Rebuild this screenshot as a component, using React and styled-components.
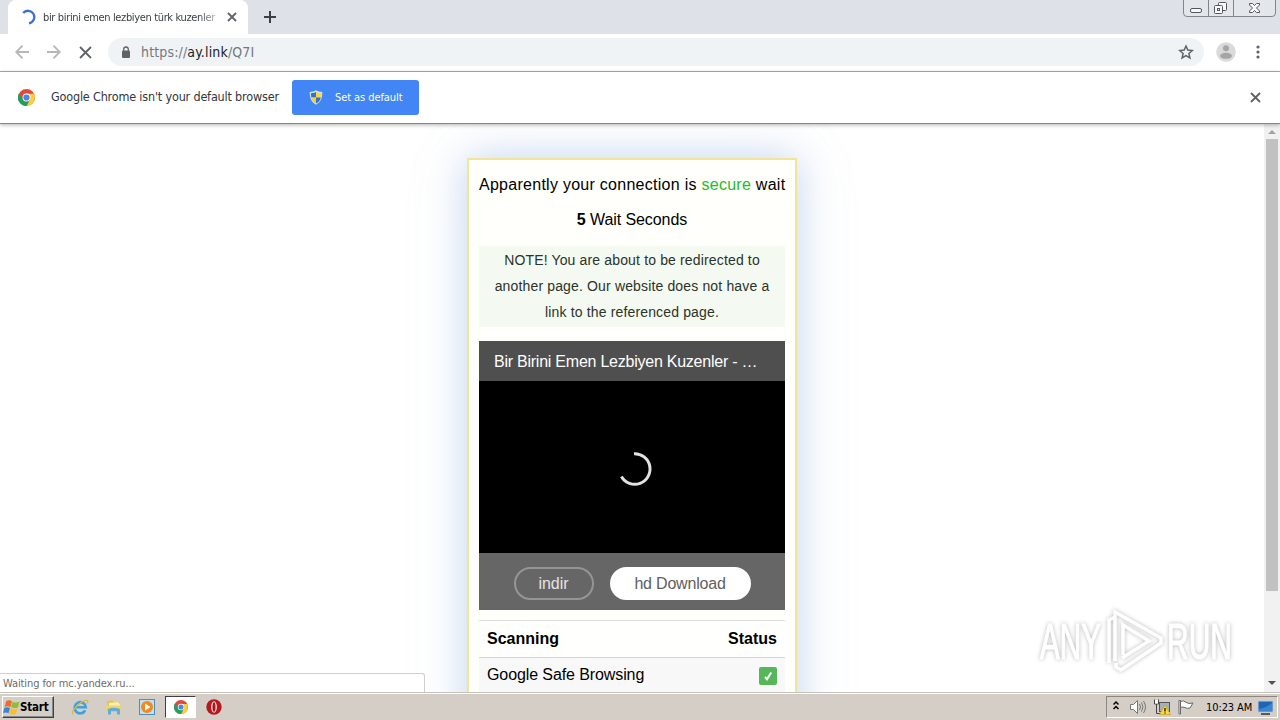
import React from 'react';
import styled, { createGlobalStyle } from 'styled-components';

const ui = '"DejaVu Sans Condensed", "DejaVu Sans", "Noto Sans", sans-serif';
const arial = '"Liberation Sans", Arial, sans-serif';

function App() {
  return (
    <Screen>
      <GlobalStyle />
      <TabStrip>
        <Tab>
          <TabSpinner />
          <TabTitle>bir birini emen lezbiyen türk kuzenler</TabTitle>
          <Cross size={8} width={1.8} />
        </Tab>
        <NewTab viewBox="0 0 12 12">
          <path d="M6 0v12M0 6h12" stroke="#3c4043" strokeWidth="2" />
        </NewTab>
        <WindowButtons />
      </TabStrip>
      <Toolbar>
        <Arrow color="#b4b6b8" />
        <Arrow color="#b4b6b8" flip />
        <Cross size={11} width={1.8} />
        <AddressBar>
          <LockIcon />
          <Url>
            https://<b>ay.link</b>/Q7I
          </Url>
          <StarIcon />
        </AddressBar>
        <ProfileIcon />
        <MenuIcon />
      </Toolbar>
      <InfoBar>
        <ChromeIcon size={17} />
        <InfoText>Google Chrome isn't your default browser</InfoText>
        <DefaultButton>
          <ShieldIcon />
          <span>Set as default</span>
        </DefaultButton>
        <InfoClose>
          <Cross size={9} width={1.8} />
        </InfoClose>
      </InfoBar>
      <Viewport>
        <Page>
          <Card>
            <Line spacing={0.27}>
              Apparently your connection is <Secure>secure</Secure> wait
            </Line>
            <Line spacing={-0.08}>
              <b>5</b> Wait Seconds
            </Line>
            <Note>
              <div>NOTE! You are about to be redirected to</div>
              <div>another page. Our website does not have a</div>
              <div>link to the referenced page.</div>
            </Note>
            <VideoTitle>Bir Birini Emen Lezbiyen Kuzenler - …</VideoTitle>
            <Video>
              <svg width="36" height="36" viewBox="0 0 36 36">
                <path
                  d="M17 2.7A15.3 15.3 0 1 1 4.4 25.5"
                  fill="none"
                  stroke="#e2e2e2"
                  strokeWidth="3"
                />
              </svg>
            </Video>
            <VideoFooter>
              <PillButton width={80}>indir</PillButton>
              <PillButton width={141} filled>
                hd Download
              </PillButton>
            </VideoFooter>
            <TableHead>
              <span>Scanning</span>
              <span>Status</span>
            </TableHead>
            <TableRow>
              <span>Google Safe Browsing</span>
              <CheckIcon />
            </TableRow>
          </Card>
        </Page>
        <ScrollBar>
          <ScrollArrow viewBox="0 0 16 15">
            <path d="M4 10l4-4 4 4z" fill="#a3a3a3" />
          </ScrollArrow>
          <ScrollThumb />
          <ScrollArrow viewBox="0 0 16 15">
            <path d="M4 4l4 4 4-4z" fill="#505050" />
          </ScrollArrow>
        </ScrollBar>
        <StatusBubble>Waiting for mc.yandex.ru...</StatusBubble>
        <Watermark />
      </Viewport>
      <Taskbar>
        <StartButton>
          <WindowsFlag />
          <span>Start</span>
        </StartButton>
        <QuickLaunch>
          <IeIcon />
          <FolderIcon />
          <PlayerIcon />
          <ActiveTask>
            <ChromeIcon size={14} />
          </ActiveTask>
          <OperaIcon />
        </QuickLaunch>
        <Tray>
          <TrayIcons />
          <Clock>10:23 AM</Clock>
          <DesktopIcon />
        </Tray>
      </Taskbar>
    </Screen>
  );
}

export default App;

// Icons
function Cross({ size, width }) {
  return (
    <svg width={size} height={size} viewBox={`0 0 ${size} ${size}`} overflow="visible">
      <path
        d={`M0 0L${size} ${size}M${size} 0L0 ${size}`}
        stroke="#5f6368"
        strokeWidth={width}
      />
    </svg>
  );
}

function TabSpinner() {
  return (
    <svg width="16" height="16" viewBox="0 0 16 16">
      <path
        d="M3.200 4A6.300 6.300 0 1 1 9 14.300"
        fill="none"
        stroke="#3b6fd6"
        strokeWidth="2.300"
      />
    </svg>
  );
}

function WindowButtons() {
  return (
    <Caption width="96" height="18" viewBox="0 0 96 18">
      <path
        d="M.5 0v13q0 3.500 3.500 3.500h85q3.500 0 3.500-3.500V0M25.500 0v16M50.500 0v16"
        fill="#e3e6ea"
        stroke="#82868c"
      />
      <g fill="#f7f8f9" stroke="#54585e">
        <rect x="7.500" y="8.500" width="11" height="4" rx="1.500" />
        <rect x="35.500" y="2.500" width="8" height="8" rx="1" />
        <rect x="31.500" y="5.500" width="8" height="8" rx="1" />
        <rect x="34.500" y="8.500" width="2" height="2" />
        <path d="M66.500 3.500h3l2 2 2-2h3v1.500l-3 3 3 3v1.500h-3l-2-2-2 2h-3v-1.500l3-3-3-3z" />
      </g>
    </Caption>
  );
}

function Arrow({ color, flip }) {
  return (
    <svg width="14" height="14" viewBox="0 0 14 14">
      <path
        d="M7.500.7L1.200 7l6.300 6.300M1.200 7H14"
        transform={flip ? 'rotate(180 7 7)' : undefined}
        fill="none"
        stroke={color}
        strokeWidth="1.800"
      />
    </svg>
  );
}

function LockIcon() {
  return (
    <svg width="10" height="13" viewBox="0 0 10 13">
      <rect x="1" y="4.500" width="8" height="7.500" rx="1" fill="#5f6368" />
      <path d="M2.700 5V3.300a2.300 2.300 0 0 1 4.600 0V5" fill="none" stroke="#5f6368" strokeWidth="1.300" />
    </svg>
  );
}

function StarIcon() {
  return (
    <svg width="16" height="16" viewBox="0 0 16 16">
      <path
        d="M8 2l1.800 4.100 4.500.4-3.400 3 1 4.400L8 11.600l-3.900 2.300 1-4.400-3.400-3 4.500-.4z"
        fill="none"
        stroke="#5f6368"
        strokeWidth="1.500"
      />
    </svg>
  );
}

function ProfileIcon() {
  return (
    <Profile width="20" height="20" viewBox="0 0 20 20">
      <circle cx="10" cy="10" r="9.800" fill="#dadada" />
      <circle cx="10" cy="6.200" r="3" fill="#a3a5a7" />
      <ellipse cx="10" cy="13.800" rx="6" ry="3" fill="#a3a5a7" />
    </Profile>
  );
}

function MenuIcon() {
  return (
    <svg width="4" height="14" viewBox="0 0 4 14" fill="#5f6368">
      <circle cx="2" cy="2" r="1.600" />
      <circle cx="2" cy="7" r="1.600" />
      <circle cx="2" cy="12" r="1.600" />
    </svg>
  );
}

function ChromeIcon({ size }) {
  return (
    <svg width={size} height={size} viewBox="0 0 18 18">
      <circle cx="9" cy="9" r="9" fill="#dd4b3e" />
      <path d="M9 5h7.900A9 9 0 0 1 9 18L12.500 11z" fill="#fccd3f" />
      <path d="M9 18A9 9 0 0 1 1.200 4.500L5.500 11 9 13l3.500-2z" fill="#1fa15d" />
      <circle cx="9" cy="9" r="4.200" fill="#fff" />
      <circle cx="9" cy="9" r="3.300" fill="#4a86ea" />
    </svg>
  );
}

function ShieldIcon() {
  return (
    <svg width="14" height="15" viewBox="0 0 14 15">
      <path d="M7 .3c2 1.300 4 1.700 6.300 1.700 0 6-1.300 10-6.300 12.700C2 12 .7 8 .7 2c2.300 0 4.300-.4 6.300-1.700z" fill="#d3dfdf" />
      <path d="M7 2v5.500H2.300C2 6 2 4.500 2 3.200c2 0 3.500-.4 5-1.200z" fill="#2f74c8" />
      <path d="M7 2v5.500h4.700C12 6 12 4.500 12 3.200 10 3.200 8.500 2.800 7 2z" fill="#f8d648" />
      <path d="M7 7.500H2.300C2.700 10.500 4.500 12.200 7 13.500z" fill="#f3cf3c" />
      <path d="M7 7.500h4.700c-.4 3-2.200 4.700-4.700 6z" fill="#2f74c8" />
    </svg>
  );
}

function CheckIcon() {
  return (
    <svg width="18" height="18" viewBox="0 0 18 18">
      <rect width="18" height="18" rx="2" fill="#55b75a" />
      <path d="M6 9.800l2 2.400 4.200-6.700" fill="none" stroke="#fff" strokeWidth="2" />
    </svg>
  );
}

function Watermark() {
  return (
    <Mark width="210" height="74" viewBox="0 0 210 74">
      <g
        fill="#fff"
        stroke="#fff"
        strokeWidth="1.200"
        fontFamily='"Liberation Sans Narrow", "Liberation Sans", sans-serif'
        fontSize="50"
      >
        <text x="5" y="52" textLength="61" lengthAdjust="spacingAndGlyphs">
          ANY
        </text>
        <text x="132" y="52" textLength="65" lengthAdjust="spacingAndGlyphs">
          RUN
        </text>
      </g>
      <g fill="none" stroke="#fff" strokeWidth="3.500">
        <path d="M74 56V13l6-3" />
        <path d="M80 54V5l46 26v5L86 63l-5-3V56" />
        <path d="M88 48V18l26 16-27 17" />
      </g>
    </Mark>
  );
}

function WindowsFlag() {
  return (
    <svg width="17" height="17" viewBox="0 0 16 16">
      <path d="M3 2q2.500-1.500 5.400 0L7 7.600q-2.600-1.400-5.400 0z" fill="#ee6b28" />
      <path d="M9 2.500q2.700 1.500 6.500.2L14 8q-3.500 1.200-6.400-.2z" fill="#8cbf38" />
      <path d="M1.300 8.400q2.700-1.400 5.300 0L5.200 13.500q-2.500-1.400-5.200 0z" fill="#3c82d3" />
      <path d="M7.300 8.800q2.900 1.400 6.400.2L12.300 14q-3.500 1.200-6.400-.2z" fill="#f8c02e" />
    </svg>
  );
}

function IeIcon() {
  return (
    <svg width="18" height="18" viewBox="0 0 18 18">
      <path
        d="M14.200 12.300A5.600 5.600 0 1 1 14.800 9.300H5"
        fill="none"
        stroke="#3ba3df"
        strokeWidth="2.600"
      />
      <path
        d="M2 16.300C-1 13 12 .8 16.500 2.500c.8.700.2 2-.5 3"
        fill="none"
        stroke="#dfb744"
        strokeWidth="1.300"
      />
    </svg>
  );
}

function FolderIcon() {
  return (
    <svg width="18" height="18" viewBox="0 0 18 18">
      <path d="M2 3l5-1 2 2h6v9H2z" fill="#e3c55c" />
      <path d="M4 5l9-1 2 2v8H4z" fill="#f8edae" />
      <path d="M1 7.500h15v3.500H1z" fill="#efd46c" />
      <path d="M3 16.500v-5.500q6-2.500 12 0v5.500h-3v-3H6v3z" fill="#62add8" />
    </svg>
  );
}

function PlayerIcon() {
  return (
    <svg width="16" height="16" viewBox="0 0 16 16">
      <rect x=".5" y=".5" width="15" height="15" fill="#c3dff2" stroke="#4a8fc0" />
      <circle cx="8" cy="8" r="6" fill="#f18a1b" />
      <path d="M6 4.500L11.500 8 6 11.500z" fill="#fff" />
    </svg>
  );
}

function OperaIcon() {
  return (
    <svg width="16" height="16" viewBox="0 0 16 16">
      <circle cx="8" cy="8" r="7.700" fill="#b3191d" />
      <ellipse cx="8" cy="8" rx="2.900" ry="5.800" fill="#f3dede" />
      <ellipse cx="8" cy="8" rx="1.500" ry="4.800" fill="#a5171b" />
    </svg>
  );
}

function TrayIcons() {
  return (
    <svg width="86" height="18" viewBox="0 0 86 18" fill="none">
      <path d="M.5 6.500L3 4l2.500 2.500M.5 11L3 8.500 5.500 11" stroke="#000" strokeWidth="1.500" />
      <path d="M17.500 6.500h3l4-4v13l-4-4h-3z" fill="#fff" stroke="#777" />
      <path d="M26.500 6q2 3 0 6M28.500 4.500q3 4.500 0 9M30.500 3q4 6 0 12" stroke="#777" />
      <path d="M41.500 1.500v4.500h4V1.500M43.500 6v9.500h5" stroke="#444" />
      <path d="M42 2v3.500h3V2" fill="#fff" />
      <rect x="46.500" y="4.500" width="10" height="9" fill="#a5b0ba" stroke="#555" />
      <path d="M52 7l5.500 9.500h-11z" fill="#ffd83a" stroke="#c3a021" strokeWidth=".7" />
      <path d="M52 10v3.500M52 14.500v1" stroke="#000" strokeWidth="1.200" />
      <path d="M66 2.500h1.500V16H66z" fill="#fff" stroke="#666" />
      <path d="M67.500 3.500q3-1.500 5 .5 3 2.500 7.500 1l-3 5q-3 1-5-.5-2-1-4.500 0z" fill="#fff" stroke="#666" />
    </svg>
  );
}

function DesktopIcon() {
  return (
    <svg width="17" height="15" viewBox="0 0 17 15">
      <rect x="1" y="1" width="15" height="11" fill="#2264b4" stroke="#b9cbdc" />
      <path d="M2 9q7-1 13-6v8H2z" fill="#3a86d2" />
      <path d="M4 14h9" stroke="#333" strokeWidth="1.500" />
    </svg>
  );
}

// styled-components
const GlobalStyle = createGlobalStyle`
  * {
    box-sizing: border-box;
  }

  body {
    margin: 0;
    overflow: hidden;
  }

  svg {
    display: block;
    flex: none;
  }
`;

const Screen = styled.div`
  display: flex;
  flex-direction: column;
  width: 1280px;
  height: 720px;
  overflow: hidden;
  background: #fff;
  font-family: ${ui};
`;

const TabStrip = styled.div`
  display: flex;
  flex: none;
  height: 34px;
  padding-left: 8px;
  background: #dee1e7;
`;

const Tab = styled.div`
  display: flex;
  align-items: center;
  width: 240px;
  padding: 0 12px;
  border-radius: 8px 8px 0 0;
  background: #fff;
`;

const TabTitle = styled.div`
  width: 174px;
  margin: 0 11px 0 7px;
  color: #3c4043;
  font-size: 11px;
  letter-spacing: -0.35px;
  white-space: nowrap;
  mask-image: linear-gradient(90deg, #000 90%, rgba(0, 0, 0, 0.3));
`;

const NewTab = styled.svg`
  align-self: center;
  width: 12px;
  height: 12px;
  margin-left: 16px;
`;

const Caption = styled.svg`
  margin: 0 1px 0 auto;
`;

const Toolbar = styled.div`
  display: flex;
  flex: none;
  align-items: center;
  height: 38px;
  padding: 0 20px 1px 15px;
  gap: 18px;
  border-bottom: 1px solid #acacac;
  background: #fff;

  > svg:nth-child(3) {
    margin-left: 1px;
  }
`;

const AddressBar = styled.div`
  display: flex;
  align-items: center;
  width: 1096px;
  height: 28px;
  margin-left: -1px;
  padding: 0 10px 0 13px;
  border-radius: 14px;
  background: #f0f3f5;
`;

const Url = styled.div`
  flex: 1;
  margin-left: 10px;
  color: #74787c;
  font-size: 14px;
  letter-spacing: 0.15px;

  b {
    color: #202124;
    font-weight: normal;
  }
`;

const Profile = styled.svg`
  margin: 0 2px 0 -6px;
`;

const InfoBar = styled.div`
  display: flex;
  position: relative;
  z-index: 1;
  flex: none;
  align-items: center;
  height: 52px;
  padding: 0 20px 0 18px;
  border-bottom: 1px solid #868686;
  background: #fff;
  box-shadow: 0 1px 4px rgba(0, 0, 0, 0.3);
`;

const InfoText = styled.div`
  width: 241px;
  margin-left: 16px;
  padding-bottom: 2px;
  color: #333639;
  font-size: 12.5px;
  letter-spacing: -0.18px;
  white-space: nowrap;
`;

const DefaultButton = styled.button`
  display: flex;
  align-items: center;
  width: 127px;
  height: 35px;
  padding: 0 0 0 17px;
  gap: 12px;
  border: none;
  border-radius: 3px;
  background: #4285f4;
  color: #fff;
  font-family: ${ui};
  font-size: 11px;
  letter-spacing: -0.08px;
  white-space: nowrap;
`;

const InfoClose = styled.div`
  margin-left: auto;
`;

const Viewport = styled.div`
  display: flex;
  position: relative;
  height: 568px;
  overflow: hidden;
`;

const Page = styled.div`
  display: flex;
  flex: 1;
  justify-content: center;
  align-items: flex-start;
  padding-top: 34px;
`;

const Card = styled.div`
  width: 330px;
  height: 600px;
  padding: 7px 10px;
  border: 2px solid #f3e596;
  background: #fffffb;
  box-shadow: 0 0 36px rgba(150, 182, 225, 0.5), 0 0 60px rgba(190, 210, 240, 0.15);
  color: #000;
  font-family: ${arial};
  font-size: 16px;
`;

const Line = styled.div`
  height: 35px;
  line-height: 35px;
  letter-spacing: ${({ spacing }) => spacing}px;
  text-align: center;
  white-space: nowrap;
`;

const Secure = styled.span`
  color: #22bd2c;
`;

const Note = styled.div`
  height: 81px;
  margin: 9px 0 14px;
  padding-top: 1px;
  background: #f4faf1;
  color: #2b332b;
  font-size: 14px;
  line-height: 26px;
  letter-spacing: 0.15px;
  text-align: center;
  white-space: nowrap;
`;

const VideoTitle = styled.div`
  height: 40px;
  padding-left: 15px;
  background: #4f4f4f;
  color: #fff;
  line-height: 41px;
  letter-spacing: -0.24px;
  white-space: nowrap;
`;

const Video = styled.div`
  display: flex;
  justify-content: center;
  align-items: center;
  height: 172px;
  padding: 3px 0 0 5px;
  background: #000;
`;

const VideoFooter = styled.div`
  display: flex;
  justify-content: center;
  height: 57px;
  margin-bottom: 10px;
  padding-top: 14px;
  gap: 16px;
  background: #666;
`;

const PillButton = styled.button`
  width: ${({ width }) => width}px;
  height: 33px;
  padding: 0;
  border: 2px solid ${({ filled }) => (filled ? '#fff' : '#959595')};
  border-radius: 17px;
  background: ${({ filled }) => (filled ? '#fff' : 'transparent')};
  color: ${({ filled }) => (filled ? '#606060' : '#e4e4e4')};
  font-family: ${arial};
  font-size: 16px;
  letter-spacing: ${({ filled }) => (filled ? '-0.2px' : '0')};
`;

const TableHead = styled.div`
  display: flex;
  justify-content: space-between;
  height: 38px;
  padding: 0 8px;
  border-top: 1px solid #dddddb;
  border-bottom: 1px solid #d6d6d4;
  background: #fffffd;
  font-weight: bold;
  line-height: 35px;
`;

const TableRow = styled.div`
  display: flex;
  justify-content: space-between;
  height: 40px;
  padding: 0 8px;
  background: #f8f8f8;
  line-height: 34px;
  letter-spacing: -0.1px;

  svg {
    margin-top: 9px;
  }
`;

const ScrollBar = styled.div`
  display: flex;
  flex-direction: column;
  width: 16px;
  background: #f1f1f1;
`;

const ScrollArrow = styled.svg`
  width: 16px;
  height: 15px;
`;

const ScrollThumb = styled.div`
  height: 452px;
  margin: 0 2px 86px;
  background: #c1c1c1;
`;

const StatusBubble = styled.div`
  position: absolute;
  bottom: 0;
  left: 0;
  width: 425px;
  height: 19px;
  padding-left: 3px;
  border-top: 1px solid #cfcfcf;
  border-right: 1px solid #cfcfcf;
  border-radius: 0 3px 0 0;
  background: #fff;
  color: #6b6b6b;
  font-size: 11px;
  line-height: 19px;
  letter-spacing: -0.1px;
`;

const Mark = styled.svg`
  position: absolute;
  top: 483px;
  left: 1035px;
  overflow: visible;
  filter: drop-shadow(0 0 2px rgba(0, 0, 0, 0.28));
`;

const Taskbar = styled.div`
  display: flex;
  flex: none;
  align-items: center;
  height: 28px;
  padding-top: 1px;
  border-top: 1px solid #c4c1b8;
  background: #d5cec7;
  box-shadow: inset 0 1px 0 #fff;
`;

const StartButton = styled.button`
  display: flex;
  align-items: center;
  width: 52px;
  height: 22px;
  margin-left: 2px;
  padding: 0;
  gap: 0;
  border: 1px solid;
  border-color: #fff #404040 #404040 #fff;
  background: #d5cec7;
  box-shadow: inset -1px -1px 0 #888;
  color: #000;
  font-family: ${ui};
  font-size: 11.5px;
  font-weight: bold;
  letter-spacing: -0.2px;
`;

const QuickLaunch = styled.div`
  display: flex;
  align-items: center;
  margin-left: 17px;
  gap: 16px;
`;

const ActiveTask = styled.div`
  display: flex;
  justify-content: center;
  align-items: center;
  width: 31px;
  height: 22px;
  margin: 0 -6px 0 -6px;
  border: 1px solid;
  border-color: #404040 #fff #fff #404040;
  background: #fff;
`;

const Tray = styled.div`
  display: flex;
  align-items: center;
  width: 172px;
  height: 22px;
  margin: 0 2px 0 auto;
  padding-left: 6px;
  border: 1px solid;
  border-color: #8c8881 #fff #fff #8c8881;
`;

const Clock = styled.div`
  width: 51px;
  margin-left: 7px;
  color: #000;
  font-size: 11px;
  letter-spacing: -0.1px;
  white-space: nowrap;
`;
